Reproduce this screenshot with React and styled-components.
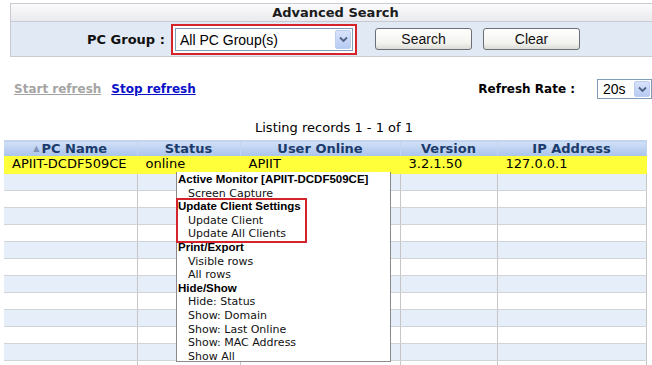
import React from 'react';
import styled, { createGlobalStyle } from 'styled-components';

const Global = createGlobalStyle`
  html, body {
    margin: 0;
    padding: 0;
    overflow: hidden;
    background: #ffffff;
  }
  body {
    font-family: "DejaVu Sans", Verdana, sans-serif;
    color: #000;
  }
`;

const Page = styled.div`
  width: 652px;
  height: 365px;
  overflow: hidden;
  padding-top: 3px;
  box-sizing: border-box;
`;

const SearchPanel = styled.div`
  margin-left: 10px;
  width: 660px;
  border: 1px solid #c9cbd0;
  border-right: none;
  box-sizing: border-box;
`;

const PanelTitle = styled.div`
  height: 17px;
  line-height: 17px;
  text-align: center;
  font-weight: bold;
  font-size: 13px;
  color: #1b1b1b;
  background: linear-gradient(#fbfbfc, #e9eaef);
  border-bottom: 1px solid #c9cbd0;
  padding-right: 10px;
`;

const FormRow = styled.div`
  height: 34px;
  background: #e1e9f5;
  display: flex;
  align-items: center;
`;

const FieldLabel = styled.span`
  font-weight: bold;
  font-size: 13px;
  margin-left: 76px;
  width: 84px;
  color: #111;
`;

const Highlight = styled.div`
  border: 2px solid #d5232c;
  padding: 2px;
  display: flex;
  background: #fff;
  margin-top: 1px;
`;

const SelectBox = styled.div`
  width: ${p => p.$w}px;
  height: ${p => p.$h}px;
  border: 1px solid #7f9db9;
  background: #fff;
  box-sizing: border-box;
  display: flex;
  align-items: center;
  justify-content: space-between;
  font-family: "Liberation Sans", Arial, sans-serif;
  font-size: 14px;
  padding-left: ${p => p.$pad}px;
`;

const Arrow = styled.span`
  width: 16px;
  height: ${p => p.$h}px;
  margin-right: 1px;
  box-sizing: border-box;
  border: 1px solid #bccdf0;
  border-radius: 2px;
  background: linear-gradient(#d8e3fb, #b7cbf3);
  display: flex;
  align-items: center;
  justify-content: center;
`;

const Button = styled.button`
  width: 97px;
  height: 22px;
  margin-left: ${p => p.$ml}px;
  border: 1px solid #6c6f75;
  border-radius: 3px;
  background: linear-gradient(#ffffff, #f3f3ef 70%, #dcdcd6);
  font-family: "Liberation Sans", Arial, sans-serif;
  font-size: 14px;
  color: #111;
  padding: 0;
`;

const RefreshRow = styled.div`
  margin-top: 22px;
  height: 20px;
  display: flex;
  align-items: center;
  padding-left: 14px;
`;

const RefreshLink = styled.a`
  font-weight: bold;
  font-size: 12px;
  text-decoration: underline;
  color: ${p => (p.$muted ? '#a4a4a4' : '#0a10c8')};
  margin-right: 10px;
  cursor: pointer;
`;

const RateLabel = styled.span`
  margin-left: auto;
  font-weight: bold;
  font-size: 12px;
  margin-right: 22px;
`;

const Listing = styled.div`
  margin-top: 21px;
  height: 16px;
  line-height: 16px;
  font-size: 13px;
  text-align: center;
  padding-left: 16px;
  margin-bottom: 4px;
`;

const TableWrap = styled.div`
  position: relative;
  margin-left: 4px;
  width: 660px;
`;

const Grid = styled.table`
  border-collapse: collapse;
  table-layout: fixed;
  width: 642px;
  font-size: 13px;
`;

const HeadCell = styled.th`
  height: 15px;
  padding: 0;
  line-height: 15px;
  font-weight: bold;
  font-size: 13px;
  color: #1b3b6d;
  background: linear-gradient(#d2e1f7, #a9c3ec);
  border-right: 1px solid #c2d3ef;
  border-top: 1px solid #c6d6f0;
  text-align: center;
  white-space: nowrap;
`;

const SortMark = styled.span`
  font-size: 8px;
  color: #7f94b8;
  margin-right: 2px;
  vertical-align: 2px;
`;

const Row = styled.tr`
  height: 17px;
  background: ${p => p.$bg};
`;

const Cell = styled.td`
  padding: 0 0 0 8px;
  height: 16px;
  line-height: 16px;
  border-right: 1px solid ${p => (p.$hl ? '#ffff3a' : '#c6c6c6')};
  border-bottom: 1px solid ${p => (p.$hl ? '#ffff3a' : '#d0d3d8')};
  white-space: nowrap;
  overflow: hidden;
`;

const Menu = styled.div`
  position: absolute;
  top: 32px;
  left: 172px;
  width: 215px;
  height: 190px;
  box-sizing: border-box;
  background: #fff;
  border: 1px solid #8a8a8a;
  border-top: none;
  padding: 1px 0 0 1px;
  font-size: 11px;
  line-height: 13.6px;
`;

const MenuGroup = styled.div`
  width: ${p => (p.$hl ? '127px' : 'auto')};
  outline: ${p => (p.$hl ? '2px solid #d5232c' : 'none')};
  outline-offset: 0px;
`;

const MenuHead = styled.div`
  font-family: "Liberation Sans", Arial, sans-serif;
  font-weight: bold;
  font-size: 11.5px;
  color: #000;
  white-space: nowrap;
`;

const MenuItem = styled.div`
  padding-left: 10px;
  color: #111;
  white-space: nowrap;
`;

const Chevron = () => (
  <svg width="9" height="7" viewBox="0 0 9 7">
    <path d="M1 1.5 L4.5 5 L8 1.5" fill="none" stroke="#4d6185" strokeWidth="1.8" />
  </svg>
);

const columns = [
  { label: 'PC Name', w: 133, sort: true },
  { label: 'Status', w: 103 },
  { label: 'User Online', w: 160 },
  { label: 'Version', w: 97 },
  { label: 'IP Address', w: 149 },
];

const record = ['APIIT-DCDF509CE', 'online', 'APIIT', '3.2.1.50', '127.0.0.1'];

const menu = [
  { head: 'Active Monitor [APIIT-DCDF509CE]', items: ['Screen Capture'] },
  { head: 'Update Client Settings', items: ['Update Client', 'Update All Clients'], hl: true },
  { head: 'Print/Export', items: ['Visible rows', 'All rows'] },
  { head: 'Hide/Show', items: ['Hide: Status', 'Show: Domain', 'Show: Last Online', 'Show: MAC Address', 'Show All'] },
];

export default function App() {
  const empty = Array.from({ length: 12 }, (_, i) => i);
  return (
    <Page>
      <Global />
      <SearchPanel>
        <PanelTitle>Advanced Search</PanelTitle>
        <FormRow>
          <FieldLabel>PC Group :</FieldLabel>
          <Highlight>
            <SelectBox $w={178} $h={23} $pad={4}>
              All PC Group(s)
              <Arrow $h={19}><Chevron /></Arrow>
            </SelectBox>
          </Highlight>
          <Button $ml={18}>Search</Button>
          <Button $ml={11}>Clear</Button>
        </FormRow>
      </SearchPanel>

      <RefreshRow>
        <RefreshLink $muted>Start refresh</RefreshLink>
        <RefreshLink>Stop refresh</RefreshLink>
        <RateLabel>Refresh Rate :</RateLabel>
        <SelectBox $w={55} $h={20} $pad={5}>
          20s
          <Arrow $h={16}><Chevron /></Arrow>
        </SelectBox>
      </RefreshRow>

      <Listing>Listing records 1 - 1 of 1</Listing>

      <TableWrap>
        <Grid>
          <colgroup>
            {columns.map(c => <col key={c.label} style={{ width: c.w }} />)}
          </colgroup>
          <thead>
            <tr>
              {columns.map(c => (
                <HeadCell key={c.label}>
                  {c.sort && <SortMark>▲</SortMark>}
                  {c.label}
                </HeadCell>
              ))}
            </tr>
          </thead>
          <tbody>
            <Row $bg="#ffff3a">
              {record.map((v, i) => <Cell key={i} $hl>{v}</Cell>)}
            </Row>
            {empty.map(i => (
              <Row key={i} $bg={i % 2 === 0 ? '#e6eef9' : '#ffffff'}>
                {columns.map(c => <Cell key={c.label}>&nbsp;</Cell>)}
              </Row>
            ))}
          </tbody>
        </Grid>

        <Menu>
          {menu.map(g => (
            <MenuGroup key={g.head} $hl={g.hl}>
              <MenuHead>{g.head}</MenuHead>
              {g.items.map(it => <MenuItem key={it}>{it}</MenuItem>)}
            </MenuGroup>
          ))}
        </Menu>
      </TableWrap>
    </Page>
  );
}
